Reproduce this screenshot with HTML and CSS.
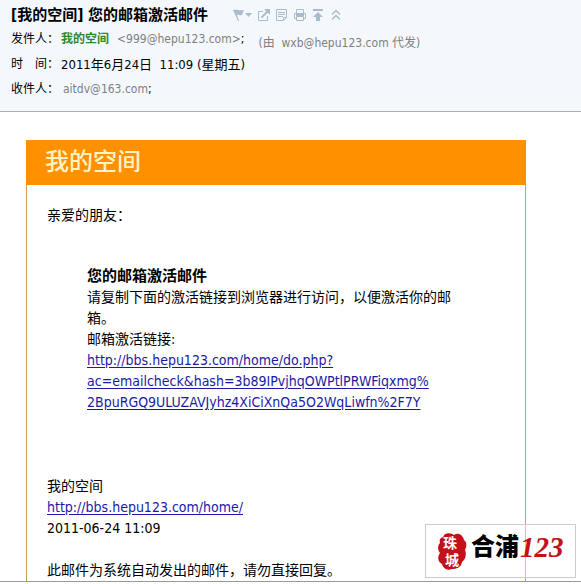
FILE: index.html
```
<!DOCTYPE html>
<html lang="zh-CN">
<head>
<meta charset="utf-8">
<title>[我的空间] 您的邮箱激活邮件</title>
<link rel="stylesheet" href="styles.css">
</head>
<body>
<div class="mail">
  <header class="head">
    <div class="subject">
      <h1>[我的空间] 您的邮箱激活邮件</h1>
      <div class="tools">
        <button class="flag" type="button" aria-label="标记"><svg width="20" height="14" viewBox="0 0 20 14"><path d="M0 2c4-1 6 1 11 0L9 7C7 8 5 6 4 7l2 6H5z" fill="currentColor"/><path d="M12 5h7l-3.500 4z" fill="currentColor"/></svg></button>
        <button type="button" aria-label="新窗口打开"><svg width="14" height="14" viewBox="0 0 14 14" fill="none" stroke="currentColor"><path d="M6 3.500H1.500v9h9V8"/><path d="M4.500 9.500l6-6" stroke-width="2"/><path d="M7 1h6v6z" fill="currentColor" stroke="none"/></svg></button>
        <button type="button" aria-label="文本"><svg width="14" height="14" viewBox="0 0 14 14" fill="none" stroke="currentColor"><path d="M1.500 1.500h10v8l-3 3h-7zM3 4.500h7M3 6.500h7M3 8.500h5M8.500 12V9.500h3"/></svg></button>
        <button type="button" aria-label="打印"><svg width="14" height="14" viewBox="0 0 14 14" fill="none" stroke="currentColor"><path d="M3.500 5V1.500h7V5M3.500 10.500h-2v-5h11v5h-2M3.500 8.500h7v4h-7z"/><path d="M3 5h8v3H3z" fill="currentColor" stroke="none"/></svg></button>
        <button type="button" aria-label="置顶"><svg width="14" height="14" viewBox="0 0 14 14" fill="currentColor"><path d="M2 1h10v2H2zM7 4l5 5H9v4H5V9H2z"/></svg></button>
        <button type="button" aria-label="收起"><svg width="14" height="14" viewBox="0 0 14 14" fill="none" stroke="currentColor" stroke-width="1.500"><path d="M3 6.500l4-4 4 4M3 11.500l4-4 4 4"/></svg></button>
      </div>
    </div>
    <div class="row from"><span class="label">发件人：</span><b class="sender">我的空间</b><span class="addr">&lt;999@hepu123.com&gt;<i>;</i></span><span class="via">(由&nbsp; wxb@hepu123.com 代发)</span></div>
    <div class="row"><span class="label"><span class="spread"><span>时</span><span>间</span></span>：</span><span class="date">2011年6月24日&nbsp; 11:09 (星期五)</span></div>
    <div class="row"><span class="label">收件人：</span><span class="addr to">aitdv@163.com<i>;</i></span></div>
  </header>
  <main class="content">
    <article class="card">
      <h2>我的空间</h2>
      <div class="letter">
        <p>亲爱的朋友：</p>
        <div class="notice">
          <h3>您的邮箱激活邮件</h3>
          <p>请复制下面的激活链接到浏览器进行访问，以便激活你的邮箱。</p>
          <p>邮箱激活链接:</p>
          <a href="#">http://bbs.hepu123.com/home/do.php?<br>ac=emailcheck&amp;hash=3b89IPvjhqOWPtlPRWFiqxmg%<br>2BpuRGQ9ULUZAVJyhz4XiCiXnQa5O2WqLiwfn%2F7Y</a>
        </div>
        <p>我的空间</p>
        <p><a href="#">http://bbs.hepu123.com/home/</a></p>
        <p>2011-06-24 11:09</p>
        <p class="auto">此邮件为系统自动发出的邮件，请勿直接回复。</p>
      </div>
    </article>
  </main>
  <div class="stamp">
    <svg width="149" height="52" viewBox="0 0 149 52" role="img" aria-label="珠城 合浦123">
      <path d="M17 12c2-5 8-4 11-2 4-3 9 0 10 5 4 3 2 8 1 10 2 5 0 10-3 12-1 6-6 7-10 7-5 2-9-1-10-5-4-2-5-7-2-11-3-4-2-8 0-10-1-3 0-5 3-6z" fill="#c4101a"/>
      <g class="seal"><text x="17" y="23">珠</text><text x="19" y="40">城</text></g>
      <text class="name" x="45" y="30">合浦</text>
      <text class="num" x="94" y="32">123</text>
    </svg>
  </div>
</div>
</body>
</html>
```
FILE: styles.css
```
* { box-sizing: border-box; }
body, h1, h2, h3, p { margin: 0; }
body {
  background: #fff;
  color: #000;
  font-family: "DejaVu Sans Condensed", "Noto Sans CJK SC", sans-serif;
  font-size: 14px;
  line-height: 21px;
}
.mail {
  position: relative;
  border-bottom: 1px solid #999;
}
.head {
  padding: 3px 11px 9px;
  background: #f4f8fc;
  border-bottom: 1px solid #a3b1be;
  font-size: 12px;
}
.subject { display: flex; align-items: center; gap: 25px; height: 24px; }
h1 { font-size: 15px; line-height: 24px; }
.tools { display: flex; align-items: center; gap: 4px; }
.tools button {
  display: flex;
  padding: 0;
  border: 0;
  background: none;
  color: #a9bccc;
}
.row { display: flex; align-items: center; height: 25px; }
.label { display: flex; width: 50px; }
.spread { display: flex; justify-content: space-between; width: 36px; }
.sender { color: #2c8a2c; margin-right: 8px; }
.date { font-size: 13px; }
.addr { color: #808080; }
.addr i { color: #000; font-style: normal; }
.to { margin-left: 2px; }
.via { margin-left: 14px; padding-top: 8px; color: #808080; }
.content { padding: 28px 55px 0 26px; }
.card { border: 1px solid #c6a04e; border-width: 0 1px; }
h2 {
  margin: 0 -1px;
  padding-left: 19px;
  background: #ff9000;
  color: #fff3c4;
  font-size: 24px;
  font-weight: 500;
  line-height: 45px;
}
.letter { padding: 20px 20px 0; }
.notice { margin: 40px 52px 63px 40px; }
h3 { font-size: 15px; line-height: 21px; }
a { color: #1a1aa6; text-underline-offset: 2px; }
.auto { margin-top: 21px; }
.stamp {
  position: absolute;
  right: 5px;
  bottom: 3px;
  display: flex;
  border: 1px solid #ccc;
  background: rgba(255, 255, 255, .4);
}
.seal { fill: #fff; font-size: 14px; font-weight: 700; }
.name { font-size: 24px; font-weight: 900; }
.num { fill: #c4101a; font: italic bold 29px "Liberation Serif", serif; }
```
